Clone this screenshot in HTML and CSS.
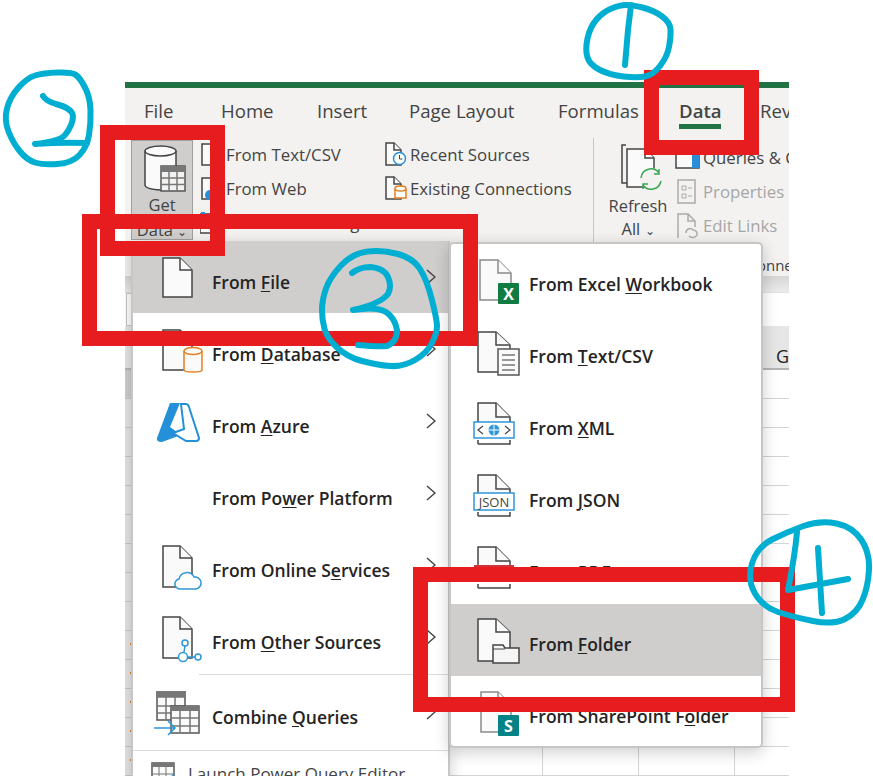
FILE: index.html
```html
<!DOCTYPE html>
<html lang="en">
<head>
<meta charset="utf-8">
<title>Excel - Get Data from Folder</title>
<link rel="stylesheet" href="styles.css">
</head>
<body>
<div class="app">
  <div class="titlebar"></div>
  <nav class="tabs">
    <span>File</span><span>Home</span><span>Insert</span><span>Page Layout</span><span>Formulas</span><span class="tab-active">Data</span><span>Review</span>
  </nav>
  <div class="ribbon">
    <div class="get-data">
      <svg class="get-icon" width="44" height="48" viewBox="0 0 44 48"><path class="i-page" d="M2 7V41Q2 45 18 46H31V24H33V7"/><ellipse class="i-page" cx="17.500" cy="7" rx="15.500" ry="5"/><rect x="18" y="22" width="24" height="25" fill="#f3f2f1" stroke="#555" stroke-width="1.500"/><path d="M18 22h24v6H18z" fill="#777"/><path d="M18 34h24M18 40.500h24M26 28v19M34 28v19" stroke="#777" stroke-width="1.500" fill="none"/></svg>
      <span class="get-label">Get</span>
      <span class="get-label">Data <i class="caret">⌄</i></span>
    </div>
    <div class="tool-col col-a">
      <div class="tool"><svg width="22" height="24" viewBox="0 0 22 24"><path class="i-page" d="M2 2H12V23H2z"/></svg><span>From Text/CSV</span></div>
      <div class="tool"><svg width="22" height="24" viewBox="0 0 22 24"><path class="i-page" d="M2 2H12V23H2z"/><circle cx="10" cy="19" r="5" fill="#2490d8"/></svg><span>From Web</span></div>
      <div class="tool"><svg width="22" height="24" viewBox="0 0 22 24"><path class="i-page" d="M0 4H12V23H0z"/><path d="M3 3v6M1 3h4" stroke="#2490d8" stroke-width="2"/></svg><span>From Table/Range</span></div>
    </div>
    <div class="tool-col col-b">
      <div class="tool"><svg width="22" height="24" viewBox="0 0 22 24"><path class="i-page" d="M1 1H9L16 8V23H1z"/><path class="i-page" d="M9 1V8H16"/><circle cx="14.500" cy="16.500" r="6" fill="#fff" stroke="#2a8dd8" stroke-width="1.500"/><path d="M14.500 13v4h3" fill="none" stroke="#444" stroke-width="1"/></svg><span>Recent Sources</span></div>
      <div class="tool"><svg width="22" height="24" viewBox="0 0 22 24"><path class="i-page" d="M1 1H9L16 8V23H1z"/><path class="i-page" d="M9 1V8H16"/><path d="M10 13v9h11v-9" fill="#fff" stroke="#e67e22" stroke-width="1.500"/><ellipse cx="15.500" cy="12.500" rx="5.500" ry="2.500" fill="#fff" stroke="#e67e22" stroke-width="1.500"/></svg><span>Existing Connections</span></div>
    </div>
    <div class="group-conn">
      <div class="conn-top">
        <div class="refresh">
          <svg width="44" height="48" viewBox="0 0 44 48"><path d="M5 2H1V40H6" fill="none" stroke="#444" stroke-width="1.500"/><path class="i-page" d="M6 6H24L33 15V44H6z"/><path class="i-page" d="M24 6V15H33"/><circle cx="30" cy="36" r="11" fill="#f3f2f1"/><path d="M20 35A10 10 0 0 1 38 30M40 38A10 10 0 0 1 22 42M38 26v5h-5M22 46v-5h5" fill="none" stroke="#3aa655" stroke-width="1.500"/></svg>
          <span class="refresh-label">Refresh</span>
          <span class="refresh-label">All <i class="caret">⌄</i></span>
        </div>
        <div class="tool-col col-c">
          <div class="tool"><svg width="26" height="24" viewBox="0 0 26 24"><rect x="1" y="4" width="23" height="18" fill="#fafafa" stroke="#444" stroke-width="1.500"/><rect x="17" y="4" width="7" height="18" fill="#2a8dd8"/></svg><span>Queries &amp; Connections</span></div>
          <div class="tool tool-off"><svg width="26" height="26" viewBox="0 0 26 26"><rect x="3" y="1" width="17" height="23" fill="none" stroke="#aaa" stroke-width="1.500"/><path d="M7 7h4v4H7zM7 15h4v4H7zM13 9h4M13 17h4" fill="none" stroke="#aaa"/></svg><span>Properties</span></div>
          <div class="tool tool-off"><svg width="26" height="26" viewBox="0 0 26 26"><path d="M3 25V1H13L20 8V14M13 1V8H20" fill="none" stroke="#aaa" stroke-width="1.500"/><path d="M11 20a4 4 0 0 1 7-3a4 4 0 0 1 4 5a5 5 0 0 1-8 1" fill="#f3f2f1" stroke="#aaa" stroke-width="1.500"/></svg><span>Edit Links</span></div>
        </div>
      </div>
      <div class="group-label">Queries &amp; Connections</div>
    </div>
  </div>
  <div class="band"></div>
  <div class="formula"><div class="corner-box"></div></div>
  <div class="head"><div class="head-corner"></div><div class="head-col">G</div></div>
  <div class="rows">
    <div class="rowheads">
      <div class="rowhead rowhead-on"></div><div class="rowhead"></div><div class="rowhead"></div><div class="rowhead"></div><div class="rowhead"></div><div class="rowhead"></div><div class="rowhead"></div><div class="rowhead"></div><div class="rowhead"></div>
      <div class="rowhead rowhead-flag"></div><div class="rowhead rowhead-flag"></div><div class="rowhead rowhead-flag"></div><div class="rowhead rowhead-flag"></div><div class="rowhead rowhead-flag"></div>
    </div>
    <div class="cells"></div>
  </div>

  <div class="menu menu-main">
    <div class="item item-on">
      <svg class="icon" width="48" height="48" viewBox="0 0 48 48"><path class="i-page" d="M8 5H25L37 17V44H8z"/><path class="i-page" d="M25 5V17H37"/></svg>
      <span class="label">From <u>F</u>ile</span>
      <svg class="chev" width="10" height="16" viewBox="0 0 10 16"><path d="M1 1l8 7-8 7"/></svg>
    </div>
    <div class="item">
      <svg class="icon" width="48" height="48" viewBox="0 0 48 48"><path class="i-page" d="M8 5H25L37 17V45H8z"/><path d="M29 26v19q0 2 9 2t9-2V26" fill="#fafafa" stroke="#e67e22" stroke-width="1.500"/><ellipse cx="38" cy="26" rx="9" ry="3.500" fill="#fafafa" stroke="#e67e22" stroke-width="1.500"/></svg>
      <span class="label">From <u>D</u>atabase</span>
      <svg class="chev" width="10" height="16" viewBox="0 0 10 16"><path d="M1 1l8 7-8 7"/></svg>
    </div>
    <div class="item">
      <svg class="icon" width="48" height="48" viewBox="0 0 48 48"><path d="M15 6H25L15 30L26 38L7 45Q1 45 2 41z" fill="#2490d8"/><path d="M26 7H31Q33 7 34 10L44 41Q44 44 41 44H31L18 36L29 32z" fill="#fff" stroke="#2490d8" stroke-width="2"/></svg>
      <span class="label">From <u>A</u>zure</span>
      <svg class="chev" width="10" height="16" viewBox="0 0 10 16"><path d="M1 1l8 7-8 7"/></svg>
    </div>
    <div class="item">
      <div class="icon icon-empty"></div>
      <span class="label">From Po<u>w</u>er Platform</span>
      <svg class="chev" width="10" height="16" viewBox="0 0 10 16"><path d="M1 1l8 7-8 7"/></svg>
    </div>
    <div class="item">
      <svg class="icon" width="48" height="48" viewBox="0 0 48 48"><path class="i-page" d="M8 5H25L37 17V46H8z"/><path class="i-page" d="M25 5V17H37"/><path d="M26 48a5 5 0 0 1-2-10a8 8 0 0 1 15-2a6 6 0 0 1 2 12z" fill="#fff" stroke="#2f96d8" stroke-width="1.500"/></svg>
      <span class="label">From Online S<u>e</u>rvices</span>
      <svg class="chev" width="10" height="16" viewBox="0 0 10 16"><path d="M1 1l8 7-8 7"/></svg>
    </div>
    <div class="item">
      <svg class="icon" width="48" height="48" viewBox="0 0 48 48"><path class="i-page" d="M8 4H25L37 16V45H8z"/><path class="i-page" d="M25 4V16H37"/><path d="M30 33L29 39M33 44H40" stroke="#2f96d8" stroke-width="1.500"/><circle cx="30" cy="30" r="3" fill="#fff" stroke="#2f96d8" stroke-width="1.500"/><circle cx="28" cy="44" r="4.500" fill="#fff" stroke="#2f96d8" stroke-width="1.500"/><circle cx="43" cy="44" r="3" fill="#fff" stroke="#2f96d8" stroke-width="1.500"/></svg>
      <span class="label">From <u>O</u>ther Sources</span>
      <svg class="chev" width="10" height="16" viewBox="0 0 10 16"><path d="M1 1l8 7-8 7"/></svg>
    </div>
    <div class="item item-combine">
      <svg class="icon" width="48" height="48" viewBox="0 0 48 48"><rect x="2" y="4" width="28" height="28" fill="#fafafa" stroke="#555" stroke-width="1.500"/><path d="M2 4h28v5H2zM2 18h28M2 25h14M11 9v23M20 9v9" fill="#777" stroke="#777" stroke-width="1.500"/><rect x="16" y="18" width="28" height="27" fill="#fafafa" stroke="#555" stroke-width="1.500"/><path d="M16 18h28v5H16z" fill="#777"/><path d="M16 30h28M16 38h28M25 23v22M35 23v22" stroke="#777" stroke-width="1.500"/><path d="M-1 40H20M13 33l7 7-7 7" fill="none" stroke="#2f96d8" stroke-width="1.500"/></svg>
      <span class="label">Combine <u>Q</u>ueries</span>
      <svg class="chev" width="10" height="16" viewBox="0 0 10 16"><path d="M1 1l8 7-8 7"/></svg>
    </div>
    <div class="item-launch">
      <svg width="26" height="26" viewBox="0 0 26 26"><rect x="1" y="1" width="22" height="24" fill="#fafafa" stroke="#555" stroke-width="1.500"/><path d="M1 1h22v4H1z" fill="#777"/><path d="M1 12h22M8 5v20M15 5v20" stroke="#777"/><path d="M17 19l6-6" stroke="#2f96d8" stroke-width="2.500"/></svg>
      <span>Launch Power Query Editor</span>
    </div>
  </div>

  <div class="menu menu-sub">
    <div class="item">
      <svg class="icon" width="48" height="48" viewBox="0 0 48 48"><path class="i-page i-soft" d="M7 4H25L38 17V44H7z"/><path class="i-page i-soft" d="M25 4V17H38"/><rect x="25" y="27" width="21" height="21" rx="1" fill="#107c41"/><text x="35.500" y="43.500" class="badge-text">X</text></svg>
      <span class="label">From Excel <u>W</u>orkbook</span>
    </div>
    <div class="item">
      <svg class="icon" width="48" height="48" viewBox="0 0 48 48"><path class="i-page" d="M5 4H23L37 17V44H5z"/><path class="i-page" d="M23 4V17H37"/><rect x="25" y="21" width="21" height="26" fill="#fafafa" stroke="#555" stroke-width="1.500"/><path d="M29 27h13M29 32h13M29 37h13M29 42h13" stroke="#777" stroke-width="1.500"/></svg>
      <span class="label">From <u>T</u>ext/CSV</span>
    </div>
    <div class="item">
      <svg class="icon" width="48" height="48" viewBox="0 0 48 48"><path class="i-page" d="M5 44V40M37 40V44H5M5 22V3H23L37 17V22"/><path class="i-page" d="M23 3V17H37"/><rect x="1" y="22" width="40" height="16" fill="#fff" stroke="#2f96d8" stroke-width="1.500"/><path d="M10 26l-5 4 5 4M32 26l5 4-5 4" fill="none" stroke="#444" stroke-width="1.200"/><circle cx="21" cy="30" r="5.500" fill="#2f96d8"/><path d="M15.500 30h11M21 24.500v11" stroke="#fff"/></svg>
      <span class="label">From <u>X</u>ML</span>
    </div>
    <div class="item">
      <svg class="icon" width="48" height="48" viewBox="0 0 48 48"><path class="i-page" d="M5 44V40M37 40V44H5M5 21V3H23L37 17V21"/><path class="i-page" d="M23 3V17H37"/><rect x="1" y="21" width="40" height="17" fill="#fff" stroke="#2f96d8" stroke-width="1.500"/><text x="21" y="34.500" class="json-text">JSON</text></svg>
      <span class="label">From <u>J</u>SON</span>
    </div>
    <div class="item">
      <svg class="icon" width="48" height="48" viewBox="0 0 48 48"><path class="i-page" d="M5 44V40M37 40V44H5M5 21V3H23L37 17V21"/><path class="i-page" d="M23 3V17H37"/><rect x="1" y="21" width="40" height="17" fill="#d13438"/></svg>
      <span class="label">From <u>P</u>DF</span>
    </div>
    <div class="item item-on">
      <svg class="icon" width="48" height="48" viewBox="0 0 48 48"><path class="i-page" d="M5 3H23L37 16V45H5z"/><path class="i-page" d="M23 3V16H37"/><path d="M20 47V29H30L32 32H46V47z" fill="#f5f5f5" stroke="#444" stroke-width="1.500"/><path d="M20 33H32" stroke="#444" stroke-width="1"/></svg>
      <span class="label">From <u>F</u>older</span>
    </div>
    <div class="item">
      <svg class="icon" width="48" height="48" viewBox="0 0 48 48"><path class="i-page i-soft" d="M8 4H25L38 17V44H8z"/><path class="i-page i-soft" d="M25 4V17H38"/><rect x="25" y="27" width="21" height="21" rx="1" fill="#038387"/><text x="35.500" y="43.500" class="badge-text">S</text></svg>
      <span class="label">From SharePoint F<u>o</u>lder</span>
    </div>
  </div>
</div>

<svg class="marks" width="873" height="776" viewBox="0 0 873 776">
  <g class="mark-box">
    <rect x="651.500" y="77.500" width="100" height="70"/>
    <rect x="107.500" y="132.500" width="110" height="116"/>
    <rect x="89.500" y="221.500" width="381" height="117"/>
    <rect x="420.500" y="574.500" width="367" height="130"/>
  </g>
  <g class="mark-pen">
    <path d="M642.500 7.500Q653 10 661.500 16Q670 22 670.500 29.500Q671 37 669 47Q667 57 660 66Q653 75 645 76.500Q637 78 623.500 76.500Q610 75 600 70Q590 65 587.500 57.500Q585 50 587.500 38.500Q590 27 596.500 19.500Q603 12 611.500 8.500Q620 5 626 5Q632 5 642.500 7.500Z"/>
    <path d="M631 5L628 30L625 65"/>
    <path d="M76 75Q80 78 85 87.500Q90 97 90.500 110Q91 123 89 135Q87 147 79.500 155Q72 163 57.500 164Q43 165 35 162.500Q27 160 20 151.500Q13 143 8.500 131.500Q4 120 7 108.500Q10 97 18.500 87.500Q27 78 35 75.500Q43 73 57.500 72.500Q72 72 76 75Z"/>
    <path d="M43 96Q46 101 56 104Q72 108 73 116Q73 125 65 135Q60 141 35 144Q60 142 87 143"/>
    <path d="M368 251.500Q383 250 398 254Q413 258 420 269Q427 280 432 300Q437 320 437 326.500Q437 333 432 343Q427 353 415 360Q403 367 390 366Q377 365 362 361Q347 357 337 347.500Q327 338 324.500 329Q322 320 322 310Q322 300 326 288.500Q330 277 341.500 265Q353 253 368 251.500Z"/>
    <path d="M352 273Q360 267 370 267Q384 268 388 277Q392 286 388 294Q380 304 353 310Q376 306 386 312Q395 318 397 330Q397 342 387 346Q378 347 358 345"/>
    <path d="M836.500 523.500Q853 527 861.500 540Q870 553 869 570Q868 587 862.500 600Q857 613 845 619Q833 625 813 621Q793 617 778 612Q763 607 755 593.500Q747 580 752 563.500Q757 547 772 539.500Q787 532 803.500 526Q820 520 836.500 523.500Z"/>
    <path d="M797 532Q795 555 788 590L848 579"/>
    <path d="M818 548L822 613"/>
  </g>
</svg>
</body>
</html>
```
FILE: styles.css
```css
* { box-sizing: border-box; }
html, body { margin: 0; height: 100%; overflow: hidden; background: #fff; }
body { font-family: "Open Sans", "Noto Sans", sans-serif; color: #444; padding: 82px 84px 0 125px; }

.app { position: relative; width: 664px; height: 694px; overflow: hidden; background: #fff; display: flex; flex-direction: column; }
.titlebar { height: 6px; background: #217346; flex: none; }

.tabs { flex: none; height: 50px; padding: 3px 0 0 19px; background: #f3f2f1; display: grid; grid-template-columns: 77px 96px 92px 149px 121px 81px 80px; font-size: 18.600px; line-height: 40px; white-space: nowrap; }
.tab-active { font-weight: 600; position: relative; }
.tab-active::after { content: ""; position: absolute; left: 0; top: 33px; width: 42px; height: 5px; background: #217346; }

.ribbon { flex: none; height: 138px; background: #f3f2f1; display: flex; padding-left: 6px; overflow: hidden; }
.get-data { flex: none; width: 62px; height: 100px; margin-top: 2px; background: #cfcecd; border: 1px solid #a19f9d; display: flex; flex-direction: column; align-items: center; font-size: 16.500px; line-height: 25px; }
.get-icon { margin: 3px 0 0 6px; flex: none; }
.get-label { white-space: nowrap; }
.caret { font-style: normal; font-size: 12px; }

.tool-col { flex: none; display: flex; flex-direction: column; }
.col-a { width: 185px; margin: -1px 0 0 7px; }
.col-b { width: 208px; margin-top: -1px; }
.col-b .tool { gap: 3px; }
.col-c { margin-left: -7px; padding-top: 2.500px; }
.tool { height: 34px; display: flex; align-items: center; gap: 4px; font-size: 16.800px; white-space: nowrap; }
.tool svg { flex: none; }
.col-c .tool { height: 36.500px; gap: 2px; }
.tool-off { color: #a6a6a6; }

.group-conn { flex: none; width: 196px; border-left: 1px solid #c8c6c4; display: flex; flex-direction: column; height: 105px; }
.conn-top { display: flex; height: 105px; flex: none; }
.refresh { flex: none; width: 88px; display: flex; flex-direction: column; align-items: center; font-size: 16.500px; line-height: 23px; }
.refresh svg { flex: none; margin: 5px 0 3px 10px; }
.group-label { font-size: 15px; line-height: 20px; margin: 12px 0 0 80px; white-space: nowrap; }

.band { flex: none; height: 16px; background: linear-gradient(#d6d6d6, #ebebeb); }
.formula { flex: none; height: 34px; background: #fff; padding: 0 1px; border-top: 1px solid #e1e1e1; }
.corner-box { width: 6px; height: 33px; border: 1px solid #c8c6c4; background: #fff; }
.head { flex: none; height: 44px; display: flex; background: #e6e6e6; border-bottom: 2px solid #b5b5b5; }
.head-corner { flex: none; width: 609px; }
.head-col { flex: none; width: 96px; border-left: 1px solid #c8c8c8; text-align: center; font-size: 18px; line-height: 24px; padding-top: 18px; color: #222; }

.rows { flex: 1; display: flex; min-height: 0; }
.rowheads { width: 8px; flex: none; background: #e6e6e6; }
.rowhead { height: 29px; border-bottom: 1px solid #c8c8c8; position: relative; }
.rowhead-on { background: #cfcfcf; }
.rowhead-flag::after { content: ""; position: absolute; right: 1px; top: 12px; width: 2px; height: 2px; background: #e8801f; }
.cells { flex: 1; background-image: linear-gradient(transparent 28px, #d4d4d4 28px), linear-gradient(90deg, transparent 95px, #d4d4d4 95px); background-size: 100% 29px, 96px 100%; background-position: 0 0, 26px 0; }

.menu { position: absolute; background: #fff; border: 2px solid #c8c6c4; box-shadow: 0 4px 16px rgba(0, 0, 0, 0.2); }
.menu-main { left: 6px; top: 159px; width: 319px; height: 560px; border-radius: 4px 0 0 0; }
.menu-sub { left: 324px; top: 160px; width: 314px; height: 506px; border-radius: 5px; overflow: hidden; }

.item { height: 72px; display: flex; align-items: flex-start; padding-left: 22px; }
.item-on { background: #d0cecd; }
.menu-main .item-on { margin-top: -2px; }
.menu-sub .item .label { margin-top: 28px; }
.menu-sub .item .icon { margin-right: 8px; }
.icon { flex: none; width: 48px; height: 48px; margin: 12px 9px 0 0; overflow: visible; }
.icon-empty { display: block; }
.label { margin-top: 29px; font-size: 17.500px; line-height: 24px; font-weight: 600; color: #252423; white-space: nowrap; }
.label u { text-underline-offset: 2px; }
.chev { flex: none; margin: 28px 12px 0 auto; }
.chev path { fill: none; stroke: #444; stroke-width: 1.500; }
.item-combine { height: 74px; position: relative; margin-top: 3px; }
.item-combine::before { content: ""; position: absolute; left: 66px; right: 0; top: -2px; height: 1px; background: #dcdcdc; }
.item-launch { border-top: 1px solid #dcdcdc; padding: 11px 0 0 18px; display: flex; align-items: flex-start; gap: 11px; font-size: 17px; line-height: 24px; white-space: nowrap; }

.i-page { fill: #fafafa; stroke: #444; stroke-width: 1.500; }
.i-soft { stroke: #8a8a8a; }
.badge-text { font-family: "Open Sans", sans-serif; font-size: 16px; font-weight: 700; fill: #fff; text-anchor: middle; }
.json-text { font-family: "Open Sans", sans-serif; font-size: 13px; fill: #444; text-anchor: middle; }

.marks { position: absolute; left: 0; top: 0; pointer-events: none; }
.mark-box rect { fill: none; stroke: #e71c1f; stroke-width: 15; }
.mark-pen path { fill: none; stroke: #00aed1; stroke-width: 6; stroke-linecap: round; stroke-linejoin: round; }
```
